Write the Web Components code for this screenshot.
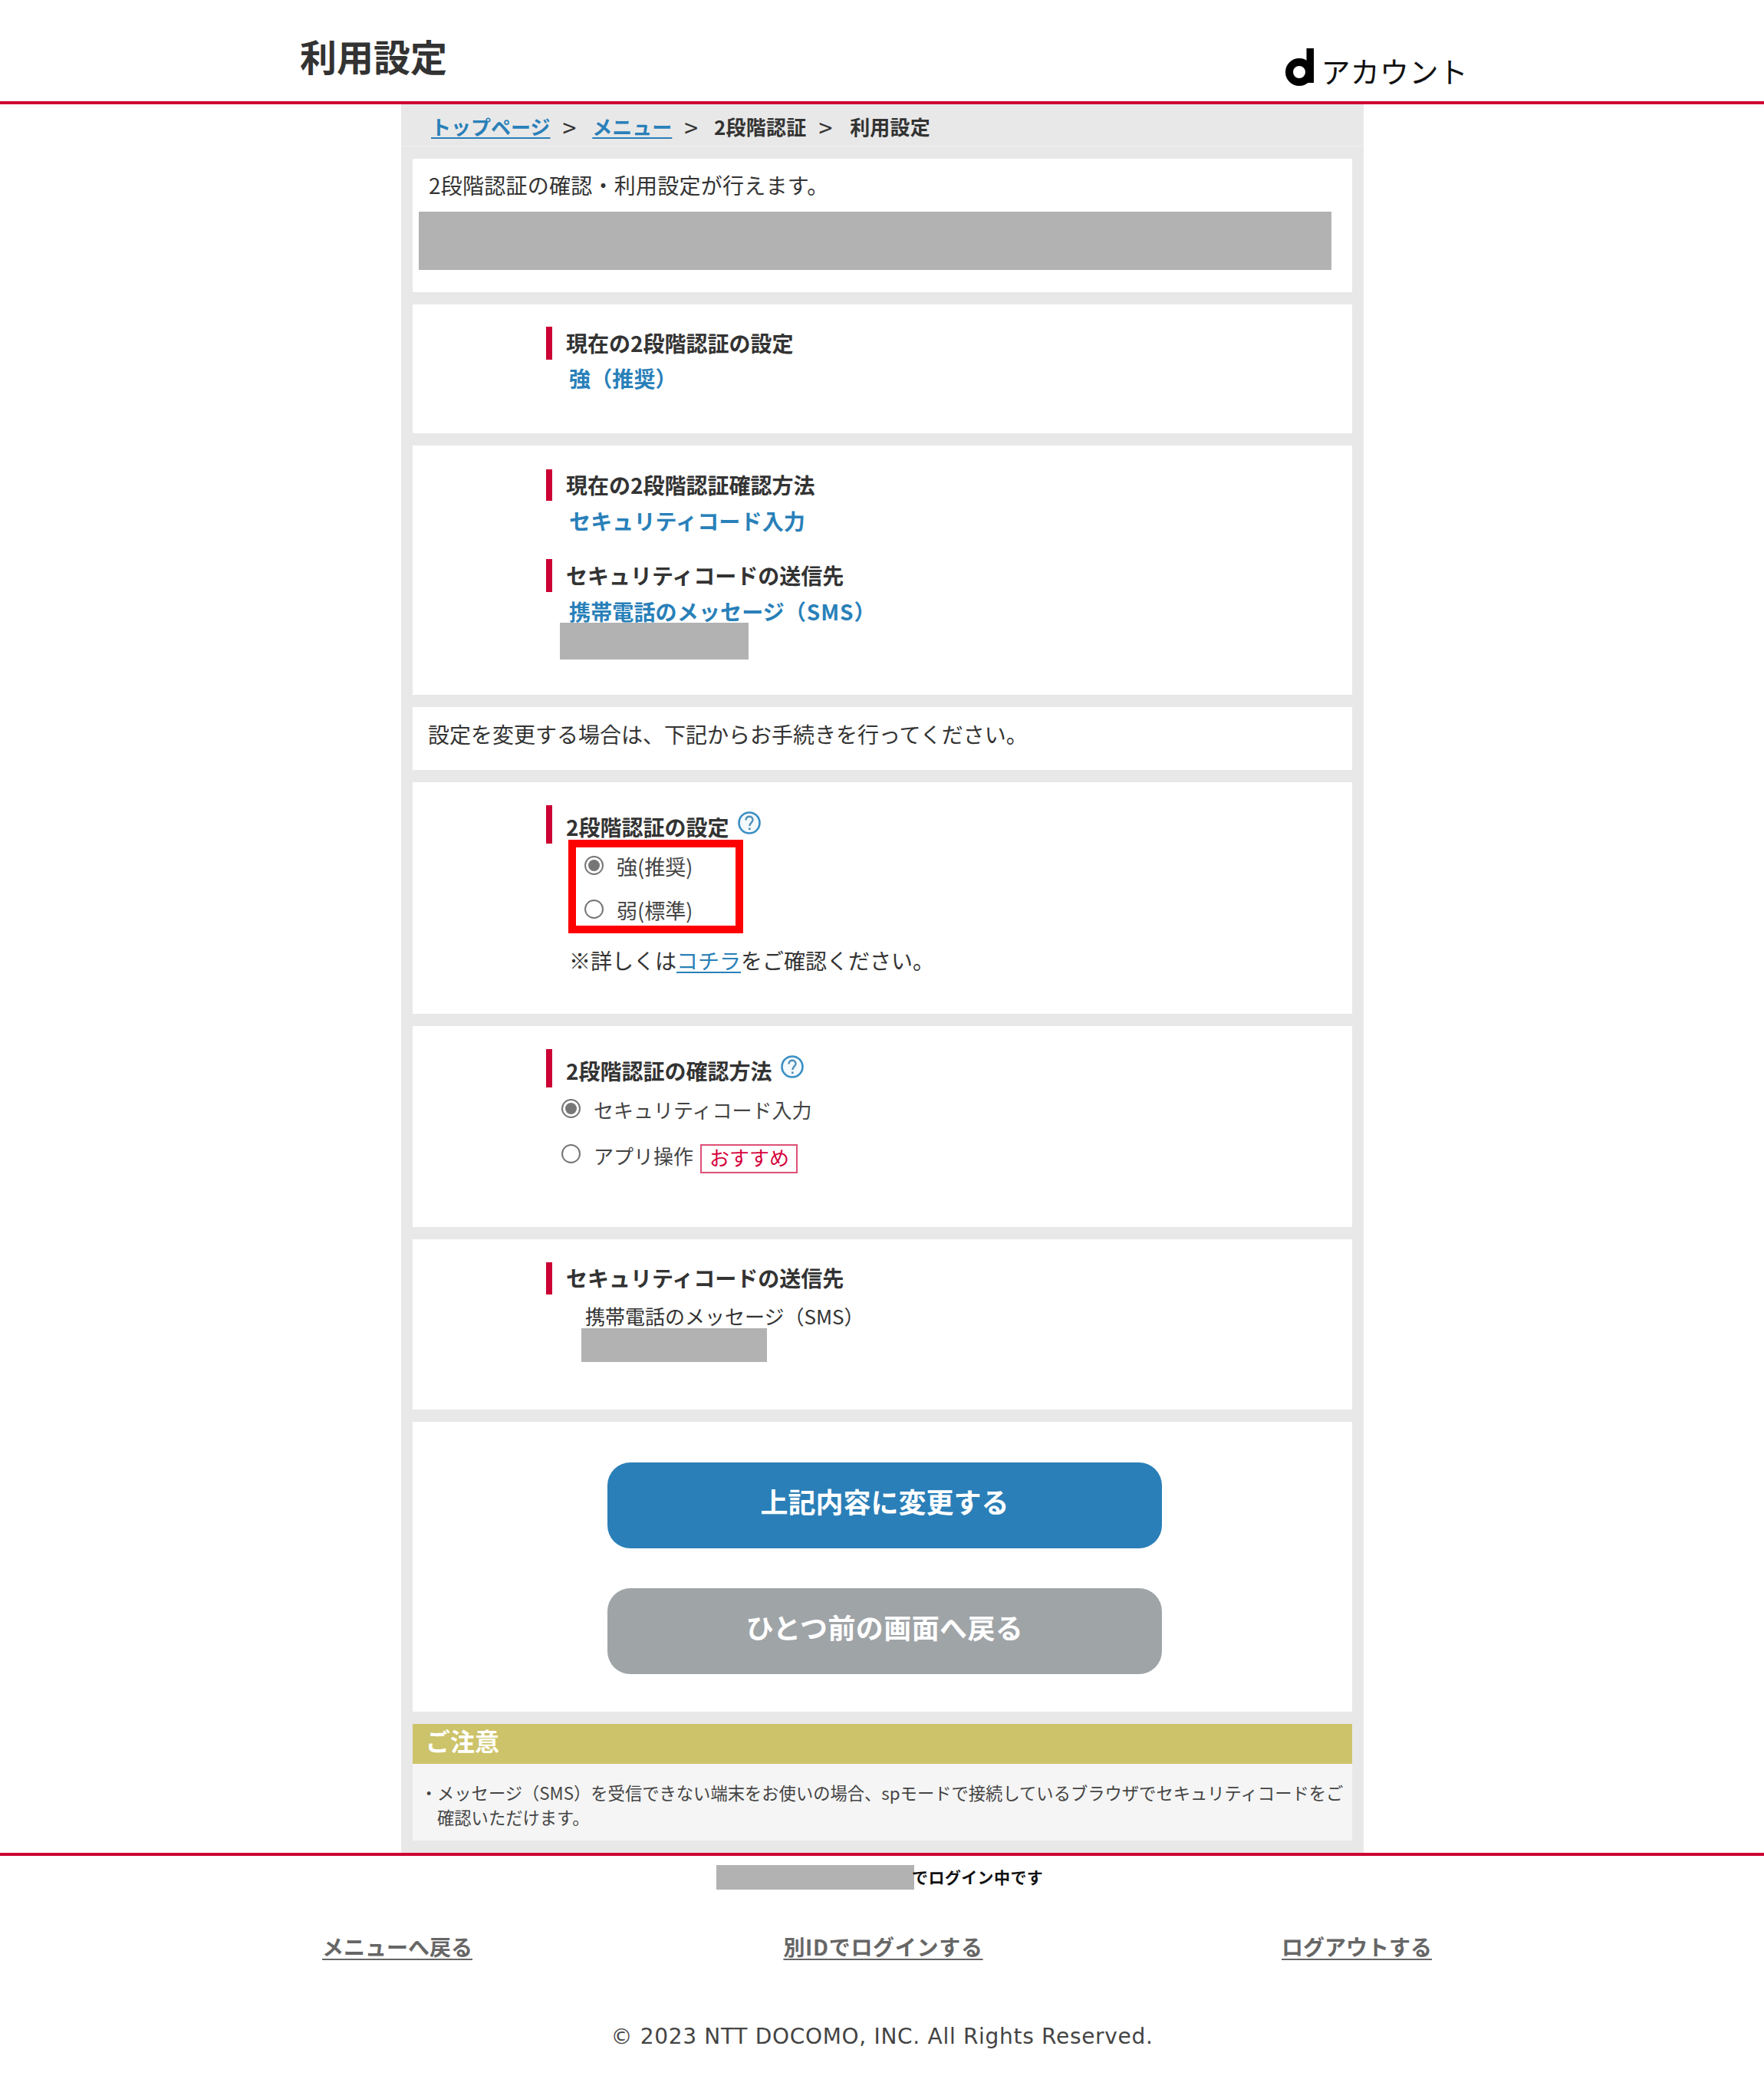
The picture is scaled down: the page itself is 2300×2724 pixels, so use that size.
<!DOCTYPE html>
<html lang="ja">
<head>
<meta charset="utf-8">
<title>利用設定</title>
<style>
    html, body { margin: 0; padding: 0; background: #fff; }
    body { font-family: "Noto Sans CJK JP", "Noto Sans", sans-serif; color: #333; font-size: 28px; }
</style>
</head>
<body>
<x-header></x-header>
<x-main>
    <x-crumbs></x-crumbs>
    <x-panel style="--h:174px;--pad:15px 0 0 0">
        <x-line left="21" height="39" style="letter-spacing:.25px">2段階認証の確認・利用設定が行えます。</x-line>
        <x-redact left="8" top="15" width="1190" height="76"></x-redact>
    </x-panel>
    <x-panel style="--h:168px;--pad:29px 0 0 0">
        <x-head height="43">現在の2段階認証の設定</x-head>
        <x-value top="4">強（推奨）</x-value>
    </x-panel>
    <x-panel style="--h:325px;--pad:31px 0 0 0">
        <x-head height="41">現在の2段階認証確認方法</x-head>
        <x-value top="6">セキュリティコード入力</x-value>
        <x-head top="30" height="43">セキュリティコードの送信先</x-head>
        <x-value top="5">携帯電話のメッセージ<span style="letter-spacing:.9px">（SMS）</span></x-value>
        <x-redact left="192" top="-5" width="246" height="48"></x-redact>
    </x-panel>
    <x-panel style="--h:82px;--pad:15px 0 0 0">
        <x-line left="20" height="40">設定を変更する場合は、下記からお手続きを行ってください。</x-line>
    </x-panel>
    <x-panel style="--h:302px">
        <x-head tall help>2段階認証の設定</x-head>
        <x-outline>
            <x-radio left="224" top="13" size="27" checked>強(推奨)</x-radio>
            <x-radio left="224" top="23" size="27">弱(標準)</x-radio>
        </x-outline>
        <x-line left="204" top="28" height="40">※詳しくは<x-link>コチラ</x-link>をご確認ください。</x-line>
    </x-panel>
    <x-panel style="--h:262px">
        <x-head tall help>2段階認証の確認方法</x-head>
        <x-radio left="194" top="12" checked>セキュリティコード入力</x-radio>
        <x-radio left="194" top="26" lift="5">アプリ操作<x-badge>おすすめ</x-badge></x-radio>
    </x-panel>
    <x-panel style="--h:222px">
        <x-head>セキュリティコードの送信先</x-head>
        <x-line left="225" top="11" height="34" size="26">携帯電話のメッセージ（SMS）</x-line>
        <x-redact left="220" top="-1" width="242" height="44"></x-redact>
    </x-panel>
    <x-panel style="--h:378px;--pad:53px 0 0 0">
        <x-button>上記内容に変更する</x-button>
        <x-button top="52" kind="back">ひとつ前の画面へ戻る</x-button>
    </x-panel>
    <x-notice title-text="ご注意">メッセージ（SMS）を受信できない端末をお使いの場合、spモードで接続しているブラウザでセキュリティコードをご確認いただけます。</x-notice>
</x-main>
<x-footer></x-footer>

<template id="x-header">
    <style>
        :host { display: flex; justify-content: space-between; height: 132px; border-bottom: 4px solid #cc0033; padding: 0 386px 0 391px; background: #fff; }
        h1 { margin: 42px 0 0; font-size: 48px; line-height: 60px; font-weight: 700; color: #333; }
        .logo { display: flex; align-items: flex-end; gap: 9px; height: 112px; align-self: flex-start; }
        .logo svg { display: block; }
        .logo span { font-size: 38px; line-height: 44px; color: #111; letter-spacing: .3px; margin-bottom: -2px; }
    </style>
    <h1>利用設定</h1>
    <div class="logo">
        <svg width="37" height="49" viewBox="0 0 37 49"><circle cx="18" cy="31" r="13" fill="none" stroke="#000" stroke-width="10"/><path d="M27.500 0H37V45H27.500z" fill="#000"/></svg>
        <span>アカウント</span>
    </div>
</template>

<template id="x-main">
    <style>
        :host { display: block; width: 1255px; margin: 0 0 0 523px; background: #e8e8e8; padding-bottom: 16px; }
        .stack { display: flex; flex-direction: column; gap: 16px; padding: 16px 15px 0; }
    </style>
    <slot name="crumbs"></slot>
    <div class="stack"><slot></slot></div>
</template>

<template id="x-crumbs">
    <style>
        :host { display: flex; align-items: center; box-sizing: border-box; height: 55px; border-bottom: 1px solid #f0f0f0; padding: 3px 0 0 39px; font-size: 26px; font-weight: 700; color: #333; }
        a { color: #2980b9; text-decoration: underline; text-underline-offset: 3px; text-decoration-thickness: 2px; }
        i { font-style: normal; font-weight: 400; margin: 0 21px 0 16px; font-size: 32px; line-height: 40px; }
        i.wide { margin-right: 23px; }
        span { letter-spacing: .2px; }
    </style>
    <a>トップページ</a><i>&gt;</i><a>メニュー</a><i>&gt;</i><span>2段階認証</span><i class="wide">&gt;</i><span>利用設定</span>
</template>

<template id="x-panel">
    <style>
        :host { display: block; box-sizing: border-box; height: var(--h); padding: var(--pad, 30px 0 0 0); background: #fff; }
    </style>
    <slot></slot>
</template>

<template id="x-line">
    <style>
        :host { display: block; color: #333; }
    </style>
    <slot></slot>
</template>

<template id="x-link"><style>:host { display: inline; color: #2980b9; text-decoration: underline; text-underline-offset: 3px; text-decoration-thickness: 2px; }</style><slot></slot></template>

<template id="x-redact">
    <style>
        :host { display: block; background: #b2b2b2; }
    </style>
</template>

<template id="x-head">
    <style>
        :host { display: flex; align-items: center; box-sizing: border-box; height: 42px; margin-left: 174px; border-left: 8px solid #cc0033; padding: 0 0 2px 18px; font-size: 28px; font-weight: 700; line-height: 40px; color: #333; }
        :host([tall]) { height: 50px; padding-top: 5px; padding-bottom: 0; padding-left: 18px; }
        svg { flex: none; margin: -9px 0 0 11px; }
    </style>
    <slot></slot>
</template>

<template id="x-value">
    <style>
        :host { display: block; margin-left: 204px; font-size: 28px; font-weight: 700; line-height: 40px; letter-spacing: .15px; color: #2980b9; }
    </style>
    <slot></slot>
</template>

<template id="x-outline">
    <style>
        :host { display: block; position: relative; }
        .box { position: absolute; left: 203px; top: -18px; width: 208px; height: 102px; border: 10px solid #ff0000; }
    </style>
    <div class="box"></div>
    <slot></slot>
</template>

<template id="x-radio">
    <style>
        :host { display: flex; align-items: center; gap: 17px; height: 34px; font-size: 26px; line-height: 34px; color: #444; }
        .dot { flex: none; box-sizing: border-box; width: 25px; height: 25px; border: 2px solid #767676; border-radius: 50%; background: #fff; display: flex; align-items: center; justify-content: center; margin-top: var(--lift, -3px); }
        :host([checked]) .dot::after { content: ""; width: 15px; height: 15px; border-radius: 50%; background: #767676; }
        span { display: flex; align-items: center; }
    </style>
    <div class="dot"></div>
    <span><slot></slot></span>
</template>

<template id="x-badge">
    <style>
        :host { display: inline-block; box-sizing: border-box; height: 38px; margin: 8px 0 0 9px; padding: 0 9px 0 10px; border: 2px solid #dd5177; color: #d6003c; font-size: 26px; line-height: 30px; }
    </style>
    <slot></slot>
</template>

<template id="x-button">
    <style>
        :host { display: block; box-sizing: border-box; width: 723px; height: 112px; margin-left: 254px; border-radius: 30px; background: #2a7fb8; color: #fff; font-size: 36px; font-weight: 700; line-height: 101px; text-align: center; }
        :host([kind="back"]) { background: #9fa4a7; letter-spacing: .4px; }
    </style>
    <slot></slot>
</template>

<template id="x-notice">
    <style>
        :host { display: block; background: #f5f5f5; color: #444; }
        h2 { margin: 0; height: 52px; padding-left: 17px; background: #cdc36a; color: #fff; font-size: 32px; font-weight: 700; line-height: 42px; }
        ul { margin: 0; padding: 21px 2px 15px 32px; list-style: none; font-size: 22.300px; line-height: 32px; position: relative; }
        li::before { content: "・"; position: absolute; left: 10px; }
    </style>
    <h2 id="t"></h2>
    <ul><li><slot></slot></li></ul>
</template>

<template id="x-footer">
    <style>
        :host { display: block; height: 304px; border-top: 4px solid #cc0033; background: #fff; color: #111; }
        .who { display: flex; align-items: center; height: 32px; margin: 12px 0 0 934px; font-size: 21px; font-weight: 700; }
        .who div { width: 258px; height: 32px; background: #b2b2b2; flex: none; }
        .who span { padding-bottom: 2px; margin-left: -3px; letter-spacing: .4px; }
        nav { display: flex; justify-content: space-between; height: 40px; margin-top: 54px; padding: 0 433px 0 420px; }
        nav a { color: #666; font-size: 28px; font-weight: 700; line-height: 40px; text-decoration: underline; text-underline-offset: 4px; }
        nav a.mid { letter-spacing: .7px; margin-left: 16px; }
        p { margin: 78px 0 0; text-align: center; font: 28px/40px "DejaVu Sans", sans-serif; letter-spacing: .7px; color: #444; }
    </style>
    <div class="who"><div></div><span>でログイン中です</span></div>
    <nav><a>メニューへ戻る</a><a class="mid">別IDでログインする</a><a>ログアウトする</a></nav>
    <p>© 2023 NTT DOCOMO, INC. All Rights Reserved.</p>
</template>

<script>
    // every element just clones its own template, the attributes below do the rest
    function plain (name, after) {
        customElements.define(name, class extends HTMLElement {
            constructor () {
                super();
                const root = this.attachShadow({mode: 'open'});
                root.appendChild(document.querySelector('#' + name).content.cloneNode(true));
            }
            connectedCallback () {
                const top = this.getAttribute('top');
                const left = this.getAttribute('left');
                if (top !== null) this.style.marginTop = top + 'px';
                if (left !== null) this.style.marginLeft = left + 'px';
                if (after) after(this);
            }
        });
    }

    plain('x-header');
    plain('x-main', el => {
        const crumbs = el.querySelector('x-crumbs');
        if (crumbs) crumbs.setAttribute('slot', 'crumbs');
    });
    plain('x-crumbs');
    plain('x-panel');
    plain('x-line', el => {
        const size = el.getAttribute('size');
        const height = el.getAttribute('height');
        if (size) el.style.fontSize = size + 'px';
        if (height) el.style.lineHeight = height + 'px';
    });
    plain('x-link');
    plain('x-redact', el => {
        el.style.width = el.getAttribute('width') + 'px';
        el.style.height = el.getAttribute('height') + 'px';
    });
    plain('x-head', el => {
        const height = el.getAttribute('height');
        if (height) el.style.height = height + 'px';
        if (el.hasAttribute('help')) {
            el.shadowRoot.appendChild(document.createRange().createContextualFragment(
                '<svg width="30" height="30" viewBox="0 0 30 30"><circle cx="15" cy="15" r="13.500" fill="#f4f9fc" stroke="#3a8fc4" stroke-width="2.600"/><path d="M10.500 11.500C10.500 8.300 12.600 6.800 15 6.800s4.500 1.500 4.500 4.200c0 3.800-4.200 4-4.200 8" fill="none" stroke="#4d8fb8" stroke-width="2.400"/><path d="M14 21.500h2.600v2.600H14z" fill="#4d8fb8"/></svg>'));
        }
    });
    plain('x-value');
    plain('x-outline');
    plain('x-radio', el => {
        const lift = el.getAttribute('lift');
        const size = el.getAttribute('size');
        if (lift) el.style.setProperty('--lift', '-' + lift + 'px');
        if (size) el.style.fontSize = size + 'px';
    });
    plain('x-badge');
    plain('x-button');
    plain('x-notice', el => {
        el.shadowRoot.querySelector('#t').textContent = el.getAttribute('title-text');
    });
    plain('x-footer');
</script>
</body>
</html>
